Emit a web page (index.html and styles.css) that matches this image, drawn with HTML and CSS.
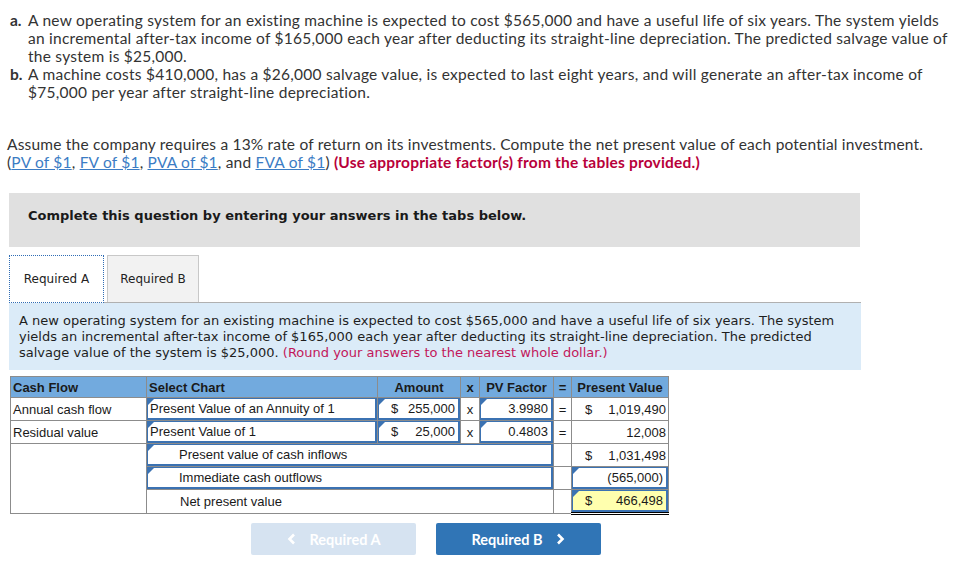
FILE: index.html
```html
<!DOCTYPE html>
<html lang="en">
<head>
<meta charset="utf-8">
<title>NPV Question</title>
<link rel="stylesheet" href="styles.css">
</head>
<body>
<div class="page">
  <div class="parts">
    <div class="part"><span class="lbl">a.</span><span class="ptxt">A new operating system for an existing machine is expected to cost $565,000 and have a useful life of six years. The system yields an incremental after-tax income of $165,000 each year after deducting its straight-line depreciation. The predicted salvage value of the system is $25,000.</span></div>
    <div class="part"><span class="lbl">b.</span><span class="ptxt">A machine costs $410,000, has a $26,000 salvage value, is expected to last eight years, and will generate an after-tax income of $75,000 per year after straight-line depreciation.</span></div>
  </div>

  <p class="assume">Assume the company requires a 13% rate of return on its investments. Compute the net present value of each potential investment. (<a class="lnk">PV of $1</a>, <a class="lnk">FV of $1</a>, <a class="lnk">PVA of $1</a>, and <a class="lnk">FVA of $1</a>) <b class="red">(Use appropriate factor(s) from the tables provided.)</b></p>

  <div class="banner">Complete this question by entering your answers in the tabs below.</div>

  <div class="tabs">
    <div class="tab active">Required A</div>
    <div class="tab">Required B</div>
  </div>
  <div class="panel">A new operating system for an existing machine is expected to cost $565,000 and have a useful life of six years. The system yields an incremental after-tax income of $165,000 each year after deducting its straight-line depreciation. The predicted salvage value of the system is $25,000. <span class="round">(Round your answers to the nearest whole dollar.)</span></div>

  <table class="grid">
    <colgroup>
      <col class="c1"><col class="c2"><col class="c3"><col class="c4"><col class="c5"><col class="c6"><col class="c7">
    </colgroup>
    <tr class="head">
      <th class="left">Cash Flow</th>
      <th class="left">Select Chart</th>
      <th>Amount</th>
      <th>x</th>
      <th>PV Factor</th>
      <th>=</th>
      <th>Present Value</th>
    </tr>
    <tr>
      <td>Annual cash flow</td>
      <td class="in"><div class="box tri">Present Value of an Annuity of 1</div></td>
      <td class="in"><div class="box tri money"><span>$</span><span>255,000</span></div></td>
      <td class="op">x</td>
      <td class="in"><div class="box tri num">3.9980</div></td>
      <td class="op">=</td>
      <td><div class="money pv"><span>$</span><span>1,019,490</span></div></td>
    </tr>
    <tr>
      <td>Residual value</td>
      <td class="in"><div class="box tri">Present Value of 1</div></td>
      <td class="in"><div class="box tri money"><span>$</span><span>25,000</span></div></td>
      <td class="op">x</td>
      <td class="in"><div class="box tri num">0.4803</div></td>
      <td class="op">=</td>
      <td><div class="num pv">12,008</div></td>
    </tr>
    <tr>
      <td rowspan="3"></td>
      <td class="in" colspan="4"><div class="box tri indent">Present value of cash inflows</div></td>
      <td></td>
      <td class="total"><div class="money pv"><span>$</span><span>1,031,498</span></div></td>
    </tr>
    <tr>
      <td class="in" colspan="4"><div class="box tri indent">Immediate cash outflows</div></td>
      <td></td>
      <td class="in"><div class="box tri num">(565,000)</div></td>
    </tr>
    <tr>
      <td colspan="4"><div class="indent plain">Net present value</div></td>
      <td></td>
      <td class="in final"><div class="box tri money yellow"><span>$</span><span>466,498</span></div></td>
    </tr>
  </table>

  <div class="nav">
    <button class="btn disabled"><svg class="chev" width="9" height="12" viewBox="0 0 9 12"><polyline points="7,1.5 2.5,6 7,10.5" fill="none" stroke="#ffffff" stroke-width="2.6"/></svg>Required A</button>
    <button class="btn primary">Required B<svg class="chev" width="9" height="12" viewBox="0 0 9 12"><polyline points="2,1.5 6.5,6 2,10.5" fill="none" stroke="#ffffff" stroke-width="2.6"/></svg></button>
  </div>
</div>
</body>
</html>
```

FILE: styles.css
```css
html, body {
  margin: 0;
  padding: 0;
  background: #ffffff;
}

.page {
  padding: 11px 0 0 0;
  font-family: "Lato", "Open Sans", sans-serif;
  color: #333333;
}

.parts {
  font-size: 15.5px;
  letter-spacing: 0.25px;
  line-height: 18px;
  padding-left: 10px;
  width: 940px;
}

.part {
  display: flex;
}

.lbl {
  font-weight: bold;
  width: 18px;
  flex: none;
  letter-spacing: 0;
}

.ptxt {
  flex: 1;
}

.assume {
  margin: 34px 0 0 7px;
  width: 922px;
  font-size: 15.5px;
  letter-spacing: 0.2px;
  line-height: 18px;
}

.lnk {
  color: #3b7cc4;
  text-decoration: underline;
}

.red {
  color: #b8003a;
}

.banner {
  margin: 22px 0 0 9px;
  width: 851px;
  height: 54px;
  box-sizing: border-box;
  padding: 15px 0 0 19px;
  background: #e0e0e0;
  font-family: "DejaVu Sans", Verdana, sans-serif;
  font-weight: bold;
  font-size: 13px;
  color: #1a1a1a;
}

.tabs {
  margin: 8px 0 0 9px;
  display: flex;
  align-items: flex-end;
  gap: 3px;
  height: 47px;
}

.tab {
  font-family: "DejaVu Sans", Verdana, sans-serif;
  font-size: 12px;
  color: #222;
  box-sizing: border-box;
  height: 47px;
  display: flex;
  align-items: center;
  justify-content: center;
  background: #f2f2f2;
  border: 1px solid #c8c8c8;
  border-bottom: none;
  width: 92px;
  position: relative;
}

.tab.active {
  background: #ffffff;
  border: 1px dotted #2f6db5;
  width: 95px;
  height: 48px;
  margin-bottom: -1px;
  z-index: 1;
}

.panel {
  margin: 0 0 0 9px;
  width: 852px;
  box-sizing: border-box;
  border-top: 1px solid #b0b0b0;
  background: #dbebf8;
  padding: 10px 10px 9px 10px;
  font-family: "DejaVu Sans", Verdana, sans-serif;
  font-size: 13px;
  line-height: 16px;
  color: #1e1e1e;
}

.round {
  color: #c2185b;
}

.grid {
  margin: 6px 0 0 10px;
  border-collapse: collapse;
  table-layout: fixed;
  width: 658px;
  font-family: "Liberation Sans", Arial, sans-serif;
  font-size: 13px;
  color: #1a1a1a;
}

.c1 { width: 136px; }
.c2 { width: 231px; }
.c3 { width: 83px; }
.c4 { width: 19px; }
.c5 { width: 74px; }
.c6 { width: 18px; }
.c7 { width: 97px; }

.grid th, .grid td {
  border: 1px solid #8c8c8c;
  height: 21px;
  padding: 0 2px;
  white-space: nowrap;
  overflow: hidden;
}

.grid .head th {
  background: #72aade;
  font-weight: bold;
  text-align: center;
  height: 20px;
}

.grid .head th.left {
  text-align: left;
}

.grid td.in {
  padding: 0;
}

.grid td.op {
  text-align: center;
  padding: 0;
}

.box {
  position: relative;
  box-sizing: border-box;
  height: 22px;
  border: 2px solid #3b72b2;
  border-width: 1px 2px 2px 1px;
  line-height: 19px;
  padding: 0 2px;
  background: #ffffff;
}

.tri::before {
  content: "";
  position: absolute;
  left: 0;
  top: 0;
  width: 0;
  height: 0;
  border-top: 6px solid #3b72b2;
  border-right: 6px solid transparent;
}

.money {
  display: flex;
  justify-content: space-between;
  padding: 0 3px 0 12px;
}

.pv {
  padding: 0 0 0 11px;
  line-height: 21px;
}

.num {
  text-align: right;
  padding-right: 3px;
}

div.num.pv {
  padding: 0;
}

.indent {
  padding-left: 31px;
}

.plain {
  line-height: 21px;
}

.grid td.total {
  border-top: 1px solid #000;
}

.grid td.final {
  border-bottom: 3px double #000;
}

.yellow {
  background: #ffffae;
}

.nav {
  margin: 8px 0 0 251px;
  display: flex;
  gap: 20px;
}

.btn {
  width: 165px;
  height: 32px;
  border: none;
  border-radius: 2px;
  font-family: "Lato", "Open Sans", sans-serif;
  font-weight: bold;
  font-size: 14.5px;
  color: #ffffff;
  display: flex;
  align-items: center;
  justify-content: center;
  gap: 14px;
  padding: 0;
}

.btn.disabled {
  background: #d6e3f1;
}

.btn.primary {
  background: #3075b6;
}

.chev {
  display: block;
}
```
